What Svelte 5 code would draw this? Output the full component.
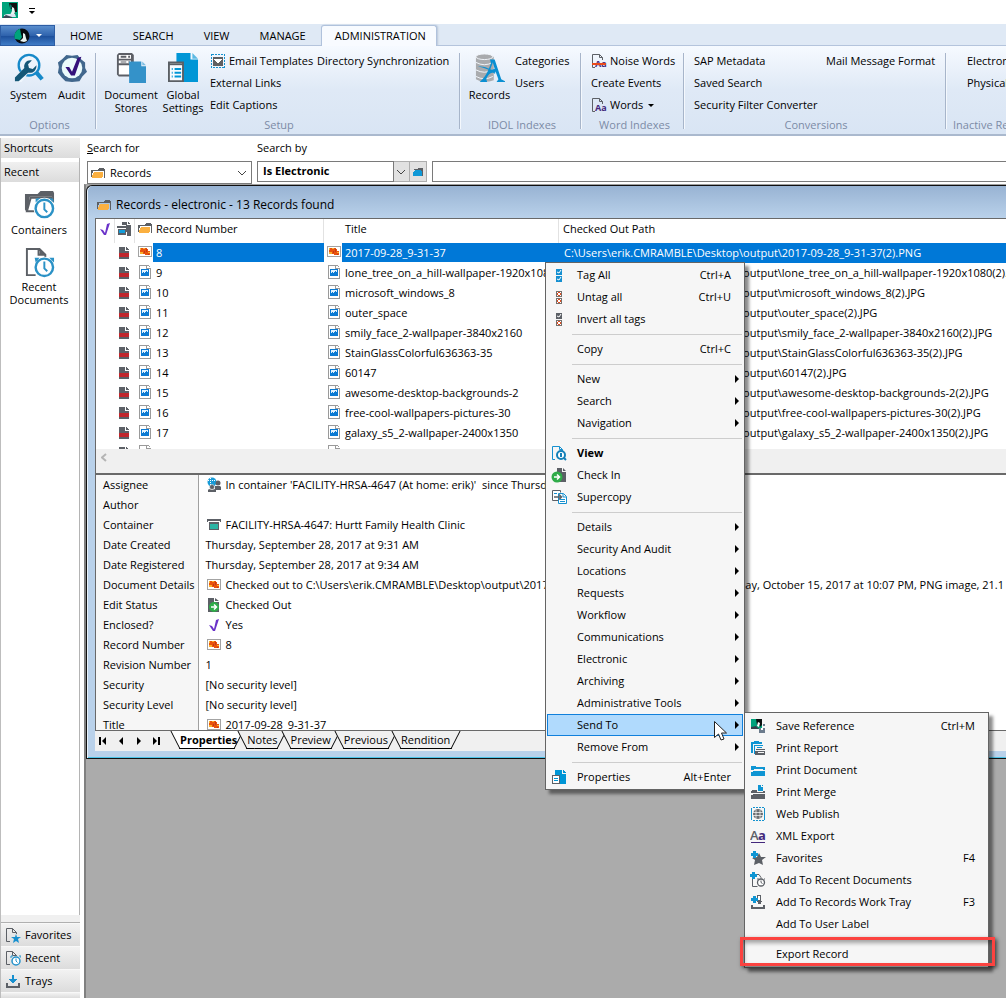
<script lang="ts">
  /**
   * Records client main window: ribbon, shortcut bar, search results list,
   * property sheet and the record context menu with its "Send To" submenu.
   */

  interface MenuEntry {
    label?: string;
    icon?: string;
    keys?: string;
    sub?: boolean;
    bold?: boolean;
    open?: boolean;
  }

  interface PropertyRow {
    name: string;
    value: string;
    icon?: string;
  }

  const TABS = ['HOME', 'SEARCH', 'VIEW', 'MANAGE', 'ADMINISTRATION'];

  const RECORDS = [
    { id: '8', title: '2017-09-28_9-31-37', file: '2017-09-28_9-31-37(2).PNG' },
    { id: '9', title: 'lone_tree_on_a_hill-wallpaper-1920x1080', file: 'lone_tree_on_a_hill-wallpaper-1920x1080(2).JPG' },
    { id: '10', title: 'microsoft_windows_8', file: 'microsoft_windows_8(2).JPG' },
    { id: '11', title: 'outer_space', file: 'outer_space(2).JPG' },
    { id: '12', title: 'smily_face_2-wallpaper-3840x2160', file: 'smily_face_2-wallpaper-3840x2160(2).JPG' },
    { id: '13', title: 'StainGlassColorful636363-35', file: 'StainGlassColorful636363-35(2).JPG' },
    { id: '14', title: '60147', file: '60147(2).JPG' },
    { id: '15', title: 'awesome-desktop-backgrounds-2', file: 'awesome-desktop-backgrounds-2(2).JPG' },
    { id: '16', title: 'free-cool-wallpapers-pictures-30', file: 'free-cool-wallpapers-pictures-30(2).JPG' },
    { id: '17', title: 'galaxy_s5_2-wallpaper-2400x1350', file: 'galaxy_s5_2-wallpaper-2400x1350(2).JPG' },
    { id: '', title: '', file: '' },
  ];

  const FOLDER = 'C:\\Users\\erik.CMRAMBLE\\Desktop\\output\\';

  const PROPERTIES: PropertyRow[] = [
    { name: 'Assignee', value: "In container 'FACILITY-HRSA-4647 (At home: erik)'  since Thursday, September 28, 2017", icon: 'people' },
    { name: 'Author', value: '' },
    { name: 'Container', value: 'FACILITY-HRSA-4647: Hurtt Family Health Clinic', icon: 'box' },
    { name: 'Date Created', value: 'Thursday, September 28, 2017 at 9:31 AM' },
    { name: 'Date Registered', value: 'Thursday, September 28, 2017 at 9:34 AM' },
    { name: 'Document Details', value: 'Checked out to C:\\Users\\erik.CMRAMBLE\\Desktop\\output\\2017-09-28_9-31-37(2).PNG by erik on Sunday, October 15, 2017 at 10:07 PM, PNG image, 21.1 KB', icon: 'photo' },
    { name: 'Edit Status', value: 'Checked Out', icon: 'checkout' },
    { name: 'Enclosed?', value: 'Yes', icon: 'tick' },
    { name: 'Record Number', value: '8', icon: 'photo' },
    { name: 'Revision Number', value: '1' },
    { name: 'Security', value: '[No security level]' },
    { name: 'Security Level', value: '[No security level]' },
    { name: 'Title', value: '2017-09-28_9-31-37', icon: 'photo' },
  ];

  const SHEETS = ['Properties', 'Notes', 'Preview', 'Previous', 'Rendition'];

  const MENU: MenuEntry[] = [
    { label: 'Tag All', icon: 'tagall', keys: 'Ctrl+A' },
    { label: 'Untag all', icon: 'untag', keys: 'Ctrl+U' },
    { label: 'Invert all tags', icon: 'invert' },
    {},
    { label: 'Copy', keys: 'Ctrl+C' },
    {},
    { label: 'New', sub: true },
    { label: 'Search', sub: true },
    { label: 'Navigation', sub: true },
    {},
    { label: 'View', icon: 'view', bold: true },
    { label: 'Check In', icon: 'checkin' },
    { label: 'Supercopy', icon: 'supercopy' },
    {},
    { label: 'Details', sub: true },
    { label: 'Security And Audit', sub: true },
    { label: 'Locations', sub: true },
    { label: 'Requests', sub: true },
    { label: 'Workflow', sub: true },
    { label: 'Communications', sub: true },
    { label: 'Electronic', sub: true },
    { label: 'Archiving', sub: true },
    { label: 'Administrative Tools', sub: true },
    { label: 'Send To', sub: true, open: true },
    { label: 'Remove From', sub: true },
    {},
    { label: 'Properties', icon: 'settings', keys: 'Alt+Enter' },
  ];

  const SEND_TO: MenuEntry[] = [
    { label: 'Save Reference', icon: 'saveref', keys: 'Ctrl+M' },
    { label: 'Print Report', icon: 'printreport' },
    { label: 'Print Document', icon: 'printdoc' },
    { label: 'Print Merge', icon: 'printmerge' },
    { label: 'Web Publish', icon: 'web' },
    { label: 'XML Export', icon: 'xml' },
    { label: 'Favorites', icon: 'addfav', keys: 'F4' },
    { label: 'Add To Recent Documents', icon: 'addrecent' },
    { label: 'Add To Records Work Tray', icon: 'addtray', keys: 'F3' },
    { label: 'Add To User Label' },
    {},
    { label: 'Export Record' },
  ];

  let activeTab = $state('ADMINISTRATION');
  let activeSheet = $state('Properties');
  let selectedRow = $state(0);
  let searchBy = $state('Is Electronic');
</script>

{#snippet icon(name: string, size = 16)}
  <svg class="icon" width={size} height={size} aria-hidden="true"><use href="#{name}" /></svg>
{/snippet}

{#snippet bigButton(name: string, lines: string[])}
  <button class="big">
    {@render icon(name, 32)}
    {#each lines as line}<span>{line}</span>{/each}
  </button>
{/snippet}

{#snippet smallButton(label: string, name = '', arrow = false)}
  <button class="small">
    {#if name}{@render icon(name)}{/if}
    <span>{label}</span>
    {#if arrow}<i class="caret"></i>{/if}
  </button>
{/snippet}

{#snippet menuList(entries: MenuEntry[])}
  {#each entries as entry}
    {#if entry.label}
      <button class="entry" class:open={entry.open} class:bold={entry.bold} role="menuitem">
        <span class="entry-icon">{#if entry.icon}{@render icon(entry.icon)}{/if}</span>
        <span class="entry-label">{entry.label}</span>
        {#if entry.keys}<span>{entry.keys}</span>{/if}
        {#if entry.sub}<i class="more"></i>{/if}
      </button>
    {:else}
      <hr />
    {/if}
  {/each}
{/snippet}

<!-- icon sprite -->
<svg class="sprite" aria-hidden="true">
  <symbol id="logo" viewBox="0 0 16 16">
    <path fill="#00a37c" d="M0 0h16v16H0z" />
    <path fill="#111" d="M7 1h8v9h-2v2l-2-1V8L8 6z" />
    <path fill="#e8f4f1" d="M10 5l2 1 1 4-1 3H8l2-4z" />
    <path fill="#08786a" d="M8 2l2 2-1 3-1-1z" />
    <path fill="#dbe3ef" d="M2 13l3-1h8l1 3H2z" />
    <path fill="#3a4656" d="M1 15l3-2 3 1 3 1v1H1z" />
  </symbol>
  <symbol id="logo-round" viewBox="0 0 16 16">
    <circle cx="8" cy="8" r="7.500" fill="#080c10" />
    <path fill="#00a37c" d="M6 .8A7.500 7.500 0 0 0 1 11l5 1 2-3-1-3z" />
    <path fill="#e8f2f0" d="M9 5l2 1 1 4 1 3-3 1-4-1 3-3z" />
  </symbol>
  <symbol id="system" viewBox="0 0 32 32">
    <circle cx="16" cy="13" r="11" fill="none" stroke="#1689c9" stroke-width="2.500" />
    <path stroke="#1689c9" stroke-width="4.500" d="M24 21l6 7" />
    <path fill="#f0f7fd" d="M2 25L13 14l4 5L8 31H2z" />
    <path fill="#155777" d="M1 26L11 16c-1-5 3-9 8-8l-4 4 1 4 4 1 4-4c0 6-4 9-9 8L5 30H1z" />
  </symbol>
  <symbol id="audit" viewBox="0 0 32 32">
    <path fill="#41678d" d="M10 2l6 1 6-1 3 4 5 4v6l2 4-5 5-3 5-8 1-7-1-4-4-4-5 1-6-1-5 5-4z" />
    <circle cx="16" cy="16" r="11" fill="#eafafb" />
    <path fill="#33127a" d="M9 15h4l3 5 6-15 4-1-7 20h-4z" />
  </symbol>
  <symbol id="stores" viewBox="0 0 32 32">
    <path fill="#5c5f66" d="M1 2l2-2h14l2 2v8h-3v15H3l-2-2z" />
    <path fill="#fff" d="M3 2h13v4H3zM3 8h13v3H3zM3 13h12v10H3z" />
    <path fill="#5c5f66" d="M5 3h6v2H5zM13 3h2v2h-2zM5 9h6v1H5zM13 9h2v1h-2z" />
    <path fill="#3492c9" d="M14 9h13v5h5v18H14z" />
    <path fill="#7ebee2" d="M28 9l4 4h-4z" />
  </symbol>
  <symbol id="global" viewBox="0 0 32 32">
    <path fill="#0096d6" d="M9 0h15v7h8v24H9z" />
    <path fill="#5bb9e3" d="M26 0l6 6h-6z" />
    <path fill="#f8fbfe" stroke="#5a5f64" stroke-width="2" d="M1 10h15v20H1z" />
    <path stroke="#5a5f64" stroke-width="2" d="M1 12h15" />
    <path stroke="#0096d6" stroke-width="2" d="M4 17h1M7 17h7M4 21h1M7 21h7M4 25h1M7 25h7" />
  </symbol>
  <symbol id="idol" viewBox="0 0 32 32">
    <path fill="#a9abae" d="M1 4v24q8 5 19 1V4z" />
    <ellipse cx="10" cy="4" rx="9" ry="3" fill="#a9abae" stroke="#f3f8fd" />
    <path fill="none" stroke="#f3f8fd" d="M1 10q9 5 18 0M1 18q9 5 18 0M1 25q9 5 18 0" />
    <path fill="#0a8fd2" d="M16 7h5l7 21 4 2v1h-9l2-3-3-8c-6 1-8 3-10 8l1 3H5c8-7 10-15 12-20l-1-4zM16 18l5-1-2-7z" />
    <path fill="#0a8fd2" d="M3 14c8 0 14 3 19 7l-1 1C15 17 10 16 3 14z" />
  </symbol>
  <symbol id="email" viewBox="0 0 16 16" shape-rendering="crispEdges">
    <path fill="none" stroke="#1592cf" stroke-dasharray="2 1" d="M1.500 1.500h13v13h-13z" />
    <path fill="#5f6062" d="M3 4h10v9H3z" />
    <path fill="#fff" d="M4 6h8v1h-1v1h-1v1H9v1H7V9H6V8H5V7H4z" />
  </symbol>
  <symbol id="words" viewBox="0 0 16 16">
    <path fill="none" stroke="#5c6066" d="M4 14.500H1.500v-13h7l3 3V7M8.500 1.500v3h3" />
    <text x="4" y="14" font-family="Open Sans" font-size="9" font-weight="700" fill="#43287c">Aa</text>
  </symbol>
  <symbol id="noise" viewBox="0 0 16 16">
    <path fill="none" stroke="#5c6066" d="M4 14.500H1.500v-13h7l3 3V7M8.500 1.500v3h3" />
    <text x="4" y="14" font-family="Open Sans" font-size="9" font-weight="700" fill="#43287c">Aa</text>
    <path fill="#ea4b1c" d="M1 10h14v2H1z" />
  </symbol>
  <symbol id="folder" viewBox="0 0 16 16" shape-rendering="crispEdges">
    <path fill="#5c5f63" d="M1 5h7V4h1V3h5v1h1v9h-1V6H3v2H2v4H1z" />
    <path fill="#fbb040" d="M4 7h9v5h-1v1H2v-3h1V8h1z" />
  </symbol>
  <symbol id="bluefolder" viewBox="0 0 16 16" shape-rendering="crispEdges">
    <path fill="#5c5f63" d="M4 5h4V4h5v8h-2V6H4z" />
    <path fill="#0f98d6" d="M5 6h6v1h1v5H3V8h1V7h1z" />
  </symbol>
  <symbol id="containers" viewBox="0 0 32 32">
    <path fill="#5c6066" d="M1 4h13l3-3h13l1 2v10h-2V7H6L4 22H2L1 20z" />
    <path fill="#fff" stroke="#5c6066" stroke-width="2" d="M7 8h21v14H3z" />
    <circle cx="21" cy="19" r="11" fill="#fff" />
    <path fill="#2b92c6" d="M12 9l5-1-5 5zM30 9l-5-1 6 5z" />
    <circle cx="21" cy="19" r="9" fill="#fff" stroke="#2b92c6" stroke-width="2.500" />
    <path fill="none" stroke="#2b92c6" stroke-width="2" d="M21 13v7l3 3" />
  </symbol>
  <symbol id="recentdocs" viewBox="0 0 32 32">
    <path fill="#fff" stroke="#5c6066" stroke-width="2" d="M12 29H3V2h13l6 6v5M15 2v6h7" />
    <path fill="#5c6066" d="M16 2l6 6h-6z" />
    <circle cx="21" cy="21" r="11" fill="#fff" />
    <path fill="#2b92c6" d="M11 11h5l-4 5zM31 11h-5l5 5z" />
    <circle cx="21" cy="21" r="9" fill="#fff" stroke="#2b92c6" stroke-width="2.500" />
    <path fill="none" stroke="#2b92c6" stroke-width="2" d="M21 15v7l3 3" />
  </symbol>
  <symbol id="favorites" viewBox="0 0 16 16">
    <path fill="none" stroke="#5c6066" d="M5 14.500H1.500v-13h6l4 4V7M7.500 1.500v4h4" />
    <path fill="#1790cf" d="M11 7l1 3h4l-3 2 1 4-3-2-3 2 1-4-3-2h4z" />
  </symbol>
  <symbol id="recent" viewBox="0 0 16 16">
    <path fill="none" stroke="#5c6066" d="M5 14.500H1.500v-13h6l4 4V6M7.500 1.500v4h4" />
    <circle cx="11" cy="11" r="4" fill="#fff" stroke="#2492cb" stroke-width="1.500" />
    <path fill="none" stroke="#2492cb" d="M11 8.500V11l1.500 1.500M6 8V6h2M14 6h2v2" />
  </symbol>
  <symbol id="tray" viewBox="0 0 16 16" shape-rendering="crispEdges">
    <path fill="#5c6066" d="M1 10h2v3h10v-3h2v5H1z" />
    <path fill="#1790cf" d="M7 2h2v4h3v1h-1v1h-1v1H9v1H7V9H6V8H5V7H4V6h3z" />
  </symbol>
  <symbol id="tick" viewBox="0 0 16 16">
    <path fill="#6a32c9" d="M3 8l3 1 2 3 2-9 3-1-4 12H7z" />
  </symbol>
  <symbol id="rectype" viewBox="0 0 16 16" shape-rendering="crispEdges">
    <path fill="#5c6066" d="M6 1h5v3h4v11h-4v-4H6zM12 1l2 2h-2z" />
    <path fill="#fff" d="M1 4h9v1H1zM1 7h9v1H1z" />
    <path fill="#5c6066" d="M1 5h9v2H1zM2 8h8v6H2z" />
    <path fill="#129cd9" d="M3 9h6v3H3z" />
  </symbol>
  <symbol id="doc" viewBox="0 0 16 16" shape-rendering="crispEdges">
    <path fill="#5c6066" d="M3 2h6v4h4v8H3zM10 2h1v1h1v1h1v1h-3z" />
    <path fill="#c1272d" d="M3 8h10v4H3z" />
  </symbol>
  <symbol id="photo" viewBox="0 0 16 16" shape-rendering="crispEdges">
    <path fill="#fff" stroke="#a3a3a3" d="M1.500 2.500h13v10h-13z" />
    <path fill="#e9520f" d="M3 4h7v1h1v2h2v4H8v-1H3z" />
    <path fill="#fbb12b" d="M3 4h1v2H3zM6 4h2v1H6zM3 8h3v2H3zM11 8h2v1h-2z" />
    <path fill="#c03a18" d="M7 7h1v2H7zM9 5h1v3H9zM11 10h1v1h-1z" />
  </symbol>
  <symbol id="image" viewBox="0 0 16 16" shape-rendering="crispEdges">
    <path fill="#fff" stroke="#9a9a9a" d="M2.500 1.500h7v3h4v10h-11zM9.500 1.500h2l2 2" />
    <path fill="#0b7ad3" d="M4 5h8v7H4z" />
    <path fill="#e3f2fc" d="M5 6h6v2h-1V7H9v1H8v1H7V8H6v1H5z" />
  </symbol>
  <symbol id="people" viewBox="0 0 16 16">
    <circle cx="6" cy="5" r="4.500" fill="#189bd7" />
    <path stroke="#fff" stroke-dasharray="1 1" d="M2 3.500h8M4.500 1v8" />
    <circle cx="12" cy="6" r="2.500" fill="#5c6066" />
    <circle cx="6" cy="10" r="2.500" fill="#5c6066" stroke="#fff" stroke-width=".5" />
    <path fill="#5c6066" d="M9 9h5l1 1v3H9zM2 13l1-1 3 1 3-1 1 1v2H2z" />
  </symbol>
  <symbol id="box" viewBox="0 0 16 16" shape-rendering="crispEdges">
    <path fill="#5c6066" d="M1 2h14v3h-1V4H2v1H1zM3 5h10v2H3zM3 7h1v6H3zM12 7h1v6h-1zM3 12h10v1H3z" />
    <path fill="#2bb5a5" d="M4 7h8v5H4z" />
  </symbol>
  <symbol id="checkout" viewBox="0 0 16 16">
    <path fill="#5c6066" d="M2 1h6v4h5v10H2zM9 1l4 3H9z" />
    <circle cx="8" cy="10" r="5" fill="#2fac49" />
    <path fill="none" stroke="#fff" stroke-width="1.500" d="M5 10h5M8 7.500l2.500 2.500L8 12.500" />
  </symbol>
  <symbol id="checkin" viewBox="0 0 16 16">
    <path fill="#5c6066" d="M6 1h5v4h4v10H6zM12 1l3 3h-3z" />
    <circle cx="6" cy="10" r="5.500" fill="#2fac49" />
    <path fill="none" stroke="#fff" stroke-width="1.500" d="M3 10h5M6 7.500L8.500 10 6 12.500" />
  </symbol>
  <symbol id="view" viewBox="0 0 16 16">
    <path fill="none" stroke="#1690cf" d="M4 14.500H1.500v-13h7l3 3V6M8.500 1.500v3h3" />
    <circle cx="10" cy="10" r="4" fill="#fff" stroke="#1480b8" stroke-width="2" />
    <path stroke="#1480b8" stroke-width="2" d="M10 8v4M13 13l2 2" />
  </symbol>
  <symbol id="supercopy" viewBox="0 0 16 16">
    <path fill="#fff" stroke="#5c6066" d="M7 11.500H1.500v-10h8v2" />
    <path fill="#fff" stroke="#1690cf" d="M7.500 4.500h5l3 3v7h-8zM12 5v3h3" />
    <path fill="none" stroke="#5c6066" stroke-width="1.500" d="M3 8h7M8 5.500L10.500 8 8 10.500" />
    <path stroke="#1690cf" d="M9 10.500h5M9 12.500h5M3 4.500h3" />
  </symbol>
  <symbol id="tagall" viewBox="0 0 16 16">
    <path fill="#158fd0" d="M5 2h6v6H5zM5 9h6v6H5z" />
    <path fill="none" stroke="#fff" d="M6 5l2 1 2-3M6 12l2 1 2-3" />
  </symbol>
  <symbol id="untag" viewBox="0 0 16 16" shape-rendering="crispEdges">
    <path fill="#77706c" d="M5 2h6v6H5zM5 9h6v6H5z" />
    <path fill="#fff" d="M6 3h4v4H6zM6 10h4v4H6z" />
    <path fill="#dd4d20" fill-rule="evenodd" d="M7 3h2v1h1v2H9v1H7V6H6V4h1zM7 4v2h2V4zM7 10h2v1h1v2H9v1H7v-1H6v-2h1zM7 11v2h2v-2z" />
  </symbol>
  <symbol id="invert" viewBox="0 0 16 16">
    <path fill="#5c6066" d="M5 2h6v6H5z" />
    <path fill="none" stroke="#fff" d="M6 5l2 1 2-3" />
    <g shape-rendering="crispEdges">
      <path fill="#77706c" d="M5 9h6v6H5z" />
      <path fill="#fff" d="M6 10h4v4H6z" />
      <path fill="#dd4d20" fill-rule="evenodd" d="M7 10h2v1h1v2H9v1H7v-1H6v-2h1zM7 11v2h2v-2z" />
    </g>
  </symbol>
  <symbol id="settings" viewBox="0 0 16 16" shape-rendering="crispEdges">
    <path fill="#0096d6" d="M4 1h7v4h4v10H4zM12 1l3 3h-3z" />
    <path fill="#fff" stroke="#5c6066" d="M1.500 6.500h7v8h-7z" />
    <path fill="#0096d6" d="M3 9h4v1H3zM3 11h4v1H3z" />
  </symbol>
  <symbol id="saveref" viewBox="0 0 16 16">
    <path fill="#00a37c" d="M1 1h11v10H1z" />
    <path fill="#0c1211" d="M6 1h6v6l-2 2-1-2H7z" />
    <path fill="#fff" d="M8 4l2 1-1 4-2-1z" />
    <path fill="#35404a" d="M1 9l5-1 3 3H1z" />
    <path fill="#6b7b8c" d="M13 6h2v2h-2zM9 10h6v5H9z" />
    <path fill="#fff" d="M11 10h2v2h-2z" />
  </symbol>
  <symbol id="printreport" viewBox="0 0 16 16" shape-rendering="crispEdges">
    <path fill="#0f95d3" d="M1 2h3V1h5v1h3v2H3v9H1zM4 5h9v1H5v8H4zM7 7h5v1H7z" />
    <path fill="#5c6066" d="M6 9h9v1H6zM5 11h10v4H5z" />
    <path fill="#f6f6f6" d="M8 12h6v1H8z" />
  </symbol>
  <symbol id="printdoc" viewBox="0 0 16 16" shape-rendering="crispEdges">
    <path fill="#0f95d3" d="M1 4h5v1h9v3H1zM1 9h14v5H1z" />
    <path fill="#f6f6f6" d="M4 7h9v1H4zM1 9h2v1H1z" />
  </symbol>
  <symbol id="printmerge" viewBox="0 0 16 16" shape-rendering="crispEdges">
    <path fill="#0f95d3" d="M8 1h3v2h2v4H8zM12 1h1v1h-1z" />
    <path fill="#5c6066" d="M2 6h5v2h6V7h2v2H1zM1 10h14v5H1z" />
    <path fill="#f6f6f6" d="M1 10h2v1H1z" />
  </symbol>
  <symbol id="web" viewBox="0 0 16 16">
    <path fill="none" stroke="#1592cf" stroke-dasharray="2 1" d="M3 1.500h11M3 14.500h11" />
    <path stroke="#1592cf" d="M1.500 2v12M14.500 2v12" />
    <circle cx="8" cy="8" r="5" fill="#6b6d71" />
    <path fill="none" stroke="#fff" stroke-width=".7" d="M3 6.500h10M3 9.500h10M6 3.500v9M10 3.500v9" />
  </symbol>
  <symbol id="xml" viewBox="0 0 16 16">
    <text x="0" y="12" font-family="Open Sans" font-size="13" fill="#5c6066" font-weight="600">A</text>
    <text x="8" y="12" font-family="Open Sans" font-size="13" fill="#43287c" font-weight="700">a</text>
    <path fill="#43287c" d="M1 14h14v1H1z" />
  </symbol>
  <symbol id="addfav" viewBox="0 0 16 16">
    <path fill="#5c6066" d="M9 3l2 4h5l-4 3 1 5-4-2-5 2 1-5-3-2 5-1z" />
    <path fill="#0f95d3" d="M3 1h3v2h2v3H6v2H3V6H1V3h2z" />
  </symbol>
  <symbol id="addrecent" viewBox="0 0 16 16">
    <path fill="none" stroke="#5c6066" d="M2.500 7v7.500h5M7 2.500h2l2 3v1" />
    <circle cx="11" cy="10.500" r="3.500" fill="#fff" stroke="#5c6066" stroke-width="1.300" />
    <path fill="none" stroke="#5c6066" d="M11 8.500v2l1.500 1M7 7h2M14 7h1" />
    <path fill="#0f95d3" d="M2 0h3v2h2v3H5v2H2V5H0V2h2z" />
  </symbol>
  <symbol id="addtray" viewBox="0 0 16 16" shape-rendering="crispEdges">
    <path fill="#5c6066" d="M7 1h4v6h1v1h-1v2H8V8H7zM1 11h2v2h10v-2h2v4H1z" />
    <path fill="#fff" d="M8 2h2v4H8z" />
    <path fill="#0f95d3" d="M3 2h3v2h2v3H6v2H3V7H1V4h2z" />
  </symbol>
</svg>

<div class="app">
  <header class="titlebar">
    {@render icon('logo')}
    <button class="quick" aria-label="Customize toolbar"><i></i></button>
  </header>

  <nav class="tabs">
    <button class="file" aria-label="File">{@render icon('logo-round')}<i class="caret"></i></button>
    {#each TABS as tab}
      <button class="tab" class:active={tab === activeTab} onclick={() => (activeTab = tab)}>{tab}</button>
    {/each}
  </nav>

  <div class="ribbon">
    <section class="group g-options">
      <div class="tools">
        {@render bigButton('system', ['System'])}
        {@render bigButton('audit', ['Audit'])}
      </div>
      <h2>Options</h2>
    </section>
    <section class="group g-setup">
      <div class="tools">
        {@render bigButton('stores', ['Document', 'Stores'])}
        {@render bigButton('global', ['Global', 'Settings'])}
        <div class="stack">
          {@render smallButton('Email Templates', 'email')}
          {@render smallButton('External Links')}
          {@render smallButton('Edit Captions')}
        </div>
        <div class="stack">{@render smallButton('Directory Synchronization')}</div>
      </div>
      <h2>Setup</h2>
    </section>
    <section class="group g-idol">
      <div class="tools">
        {@render bigButton('idol', ['Records'])}
        <div class="stack">
          {@render smallButton('Categories')}
          {@render smallButton('Users')}
        </div>
      </div>
      <h2>IDOL Indexes</h2>
    </section>
    <section class="group g-words">
      <div class="tools">
        <div class="stack">
          {@render smallButton('Noise Words', 'noise')}
          {@render smallButton('Create Events')}
          {@render smallButton('Words', 'words', true)}
        </div>
      </div>
      <h2>Word Indexes</h2>
    </section>
    <section class="group g-conv">
      <div class="tools">
        <div class="stack">
          {@render smallButton('SAP Metadata')}
          {@render smallButton('Saved Search')}
          {@render smallButton('Security Filter Converter')}
        </div>
        <div class="stack">{@render smallButton('Mail Message Format')}</div>
      </div>
      <h2>Conversions</h2>
    </section>
    <section class="group g-inactive">
      <div class="tools">
        <div class="stack">
          {@render smallButton('Electronic')}
          {@render smallButton('Physical')}
        </div>
      </div>
      <h2>Inactive Records</h2>
    </section>
  </div>

  <div class="workspace">
    <aside class="shortcuts">
      <h2>Shortcuts</h2>
      <div class="shortcut-panel">
        <h3>Recent</h3>
        <button class="shortcut">{@render icon('containers', 32)}<span>Containers</span></button>
        <button class="shortcut">{@render icon('recentdocs', 32)}<span>Recent Documents</span></button>
      </div>
      <div class="grip"></div>
      <button class="bar">{@render icon('favorites')}Favorites</button>
      <button class="bar">{@render icon('recent')}Recent</button>
      <button class="bar">{@render icon('tray')}Trays</button>
      <div class="bar"></div>
    </aside>

    <main>
      <form class="search">
        <label for="search-for"><u>S</u>earch for</label>
        <label for="search-by" class="by">Search by</label>
        <div class="combo">
          {@render icon('folder')}
          <select id="search-for"><option>Records</option></select>
          <svg class="chev" width="9" height="6" aria-hidden="true"><path d="M0 1l4 4 4-4" /></svg>
        </div>
        <div class="criteria">
          <input id="search-by" type="text" bind:value={searchBy} />
          <button type="button" aria-label="Search methods">
            <svg class="chev" width="9" height="6" aria-hidden="true"><path d="M0 1l4 4 4-4" /></svg>
          </button>
          <button type="button" aria-label="Browse">{@render icon('bluefolder')}</button>
        </div>
        <input class="text" type="text" aria-label="Search text" />
      </form>

      <div class="mdi">
        <section class="child">
          <h1>{@render icon('folder')}Records - electronic - 13 Records found</h1>

          <div class="list">
            <div class="viewport">
              <table>
                <colgroup>
                  <col class="c-tag" /><col class="c-type" /><col class="c-number" /><col class="c-title" /><col />
                </colgroup>
                <thead>
                  <tr>
                    <th>{@render icon('tick')}</th>
                    <th>{@render icon('rectype')}</th>
                    <th><span class="cell">{@render icon('folder')}<span>Record Number</span></span></th>
                    <th class="h-title">Title</th>
                    <th class="h-path">Checked Out Path</th>
                  </tr>
                </thead>
                <tbody>
                  {#each RECORDS as record, i}
                    <tr class:selected={i === selectedRow} onclick={() => (selectedRow = i)}>
                      <td></td>
                      <td>{@render icon('doc')}</td>
                      <td><span class="cell">{@render icon(i === 0 ? 'photo' : 'image')}<span>{record.id}</span></span></td>
                      <td><span class="cell">{@render icon(i === 0 ? 'photo' : 'image')}<span>{record.title}</span></span></td>
                      <td class="path">{record.file ? FOLDER + record.file : ''}</td>
                    </tr>
                  {/each}
                </tbody>
              </table>
            </div>
            <div class="hscroll">
              <svg width="6" height="9" aria-hidden="true"><path d="M5 1L1 4.500 5 8" /></svg>
            </div>
          </div>

          <div class="sheet">
            <table>
              <tbody>
                {#each PROPERTIES as row}
                  <tr>
                    <th scope="row">{row.name}</th>
                    <td>
                      <span class="value">{#if row.icon}{@render icon(row.icon)}{/if}<span>{row.value}</span></span>
                    </td>
                  </tr>
                {/each}
              </tbody>
            </table>
          </div>

          <div class="sheet-tabs">
            <div class="nav">
              <button aria-label="First"><svg width="8" height="8"><path d="M0 0h2v8H0zM7 0v8L3 4z" /></svg></button>
              <button aria-label="Previous"><svg width="8" height="8"><path d="M6 0v8L2 4z" /></svg></button>
              <button aria-label="Next"><svg width="8" height="8"><path d="M2 0v8l4-4z" /></svg></button>
              <button aria-label="Last"><svg width="8" height="8"><path d="M6 0h2v8H6zM1 0v8l4-4z" /></svg></button>
            </div>
            {#each SHEETS as sheet}
              <button class="sheet-tab" class:active={sheet === activeSheet} onclick={() => (activeSheet = sheet)}>
                <span>{sheet}</span>
              </button>
            {/each}
          </div>
        </section>
      </div>
    </main>
  </div>

  <div class="menu context" role="menu" tabindex="-1">
    {@render menuList(MENU)}
    <svg class="pointer" width="13" height="20" viewBox="0 0 13 20" aria-hidden="true">
      <path d="M.5.5v16l4-3.500 2.500 6 3-1-2.500-6h5z" fill="#fff" stroke="#222" />
    </svg>
    <div class="menu submenu" role="menu" tabindex="-1">
      {@render menuList(SEND_TO)}
      <div class="highlight"></div>
    </div>
  </div>
</div>

<style>
  :global(body) {
    margin: 0;
    overflow: hidden;
  }

  .app {
    position: relative;
    display: flex;
    flex-direction: column;
    height: 100vh;
    overflow: hidden;
    background: #fff;
    color: #000;
    font: 11px/14px 'Open Sans', 'Noto Sans', sans-serif;
  }

  .app :is(button, input, select) {
    font: inherit;
    color: inherit;
    margin: 0;
    padding: 0;
    border: 0;
    border-radius: 0;
    background: none;
    box-sizing: border-box;
    white-space: nowrap;
  }

  h1,
  h2,
  h3 {
    margin: 0;
    font: inherit;
  }

  .sprite {
    position: absolute;
    width: 0;
    height: 0;
  }

  .icon {
    flex: none;
    display: block;
  }

  .caret {
    border: 3px solid transparent;
    border-top-color: currentColor;
    border-bottom: 0;
  }

  /* title bar and ribbon */
  .titlebar {
    display: flex;
    align-items: center;
    gap: 11px;
    height: 24px;
    padding: 0 2px 4px;
    box-sizing: border-box;
  }

  .quick i {
    display: block;
    border: 3px solid transparent;
    border-top-color: #000;
    border-bottom: 0;
    position: relative;
    margin-top: 4px;
  }

  .quick i::before {
    content: '';
    position: absolute;
    left: -3px;
    top: -6px;
    width: 6px;
    height: 1px;
    background: #000;
  }

  .tabs {
    display: flex;
    height: 22px;
    background: #dfe9f5;
    box-shadow: inset 0 -1px #b4c4dc;
  }

  .tabs .file {
    display: flex;
    align-items: center;
    justify-content: center;
    gap: 6px;
    width: 55px;
    margin-top: 1px;
    border: 1px solid #2d5da4;
    background: linear-gradient(#5a8ecd, #2f63ad 50%, #1b4d99 51%, #3f7cc6);
    color: #fff;
  }

  .tabs .tab {
    padding: 0 14px;
    border: 1px solid transparent;
    border-bottom: 0;
  }

  .tabs .tab.active {
    margin-top: 1px;
    padding: 0 10px 0 13px;
    background: #f8fbff;
    border-color: #b0c2dc;
    border-radius: 3px 3px 0 0;
    box-shadow: 1px 0 2px #b9c6d8;
  }

  .ribbon {
    display: flex;
    flex: none;
    height: 90px;
    box-sizing: border-box;
    background: linear-gradient(#f6faff, #dfe9f6 50%, #d9e5f4);
    border-bottom: 2px solid #aab9ce;
    margin-bottom: 2px;
    overflow: hidden;
  }

  .group {
    flex: none;
    display: flex;
    flex-direction: column;
    justify-content: space-between;
    box-sizing: border-box;
    padding: 4px 0 2px;
    position: relative;
  }

  .group::after {
    content: '';
    position: absolute;
    right: 0;
    top: 7px;
    bottom: 5px;
    width: 1px;
    background: #a7b5ca;
    box-shadow: 1px 0 #f4f8fd;
  }

  .group h2 {
    text-align: center;
    color: #7c8ba6;
    white-space: nowrap;
  }

  .g-options { width: 96px; padding-left: 7px; padding-right: 4px; }
  .g-setup { width: 364px; padding-left: 6px; padding-right: 4px; }
  .g-idol { width: 121px; padding-left: 7px; padding-right: 4px; }
  .g-words { width: 103px; padding-left: 10px; padding-right: 6px; }
  .g-conv { width: 262px; padding-left: 10px; padding-right: 8px; }
  .g-inactive { width: 160px; padding-left: 7px; }
  .g-inactive h2 { text-align: left; }
  .g-inactive .stack { padding-left: 14px; }
  .g-conv .stack:first-child { width: 132px; }

  .tools {
    display: flex;
    height: 66px;
  }

  .tools > * {
    flex: none;
  }

  .big {
    display: flex;
    flex-direction: column;
    align-items: center;
    width: 43px;
    padding-top: 3px !important;
    line-height: 13px !important;
  }

  .big .icon {
    width: 30px;
    height: 30px;
    margin-bottom: 5px;
  }

  .g-setup .big {
    width: 58px;
  }

  .g-setup .big + .big {
    width: 46px;
  }

  .g-idol .big {
    width: 45px;
  }

  .stack {
    padding-left: 4px;
    box-sizing: border-box;
  }

  .g-setup .stack:last-child,
  .g-idol .stack {
    padding-left: 3px;
  }

  .g-words .stack,
  .g-conv .stack {
    padding-left: 0;
  }

  .g-setup .stack:nth-last-child(2) {
    width: 108px;
  }

  .small {
    display: flex;
    align-items: center;
    gap: 3px;
    height: 22px;
  }

  .small .caret {
    margin-left: 2px;
  }

  /* shortcut bar */
  .workspace {
    flex: 1;
    display: flex;
    min-height: 0;
  }

  .shortcuts {
    flex: none;
    display: flex;
    flex-direction: column;
    width: 80px;
    background: #e9e9e9;
    box-sizing: border-box;
    border-left: 1px solid #bdbdbd;
  }

  .shortcuts h2,
  .shortcuts h3 {
    height: 20px;
    line-height: 20px;
    padding-left: 3px;
    background: linear-gradient(#f0f0f0, #dcdcdc);
  }

  .shortcuts h3 {
    margin-top: 4px;
    margin-bottom: 8px;
  }

  .shortcut-panel {
    flex: 1;
    background: #fff;
    border-right: 1px solid #b4b4b4;
  }

  .shortcut {
    display: flex;
    flex-direction: column;
    align-items: center;
    width: 76px;
    margin-bottom: 11px !important;
    line-height: 13px !important;
    white-space: normal !important;
  }

  .shortcut .icon {
    width: 31px;
    height: 31px;
    margin-bottom: 2px;
  }

  .shortcut span {
    width: 64px;
  }

  .grip {
    height: 7px;
    background: #f0f0f0;
    border-bottom: 1px solid #b0b0b0;
  }

  .bar {
    display: flex;
    align-items: center;
    gap: 4px;
    height: 23px;
    padding-left: 4px !important;
    background: linear-gradient(#f2f2f2, #dcdcdc) !important;
    border-top: 1px solid #f8f8f8 !important;
  }

  div.bar {
    height: 6px;
    box-sizing: border-box;
  }

  /* search form */
  main {
    flex: 1;
    display: flex;
    flex-direction: column;
    min-width: 0;
    padding-left: 4px;
  }

  .search {
    display: grid;
    grid-template-columns: 165px 170px 1fr;
    column-gap: 5px;
    row-gap: 3px;
    padding-left: 3px;
  }

  .search label {
    line-height: 20px;
  }

  .search .by {
    grid-column: 2 / 4;
  }

  .combo {
    display: flex;
    align-items: center;
    height: 23px;
    box-sizing: border-box;
    border: 1px solid #7a7a7a;
    padding: 0 4px 0 2px;
  }

  .combo select {
    flex: 1;
    appearance: none;
    padding-left: 4px;
    outline: 0;
  }

  .chev {
    fill: none;
    stroke: #444;
  }

  .criteria {
    display: flex;
    height: 21px;
  }

  .criteria input {
    width: 137px;
    border: 1px solid #7a7a7a;
    padding-left: 5px;
    padding-bottom: 2px;
    font-weight: 700;
  }

  .criteria button {
    display: flex;
    align-items: center;
    justify-content: center;
    width: 17px;
    background: #e1e1e1;
    border: 1px solid #adadad;
    border-left: 0;
  }

  .search .text {
    height: 21px;
    border: 1px solid #7a7a7a;
    border-right: 0;
  }

  /* result window */
  .mdi {
    flex: 1;
    min-height: 0;
    background: #ababab;
    border-top: 1px solid #a0a0a0;
    border-left: 2px solid #808080;
  }

  .child {
    border: 1px solid #111;
    border-right: 0;
    border-radius: 6px 0 0 0;
    padding: 1px 0 7px 8px;
    background: linear-gradient(#98b3d3, #b9d1ea 32px);
    box-shadow: inset 1px 0 #eaf3fb, inset 0 -1px #4cc4e8;
  }

  .child h1 {
    display: flex;
    align-items: center;
    gap: 4px;
    height: 31px;
    padding: 5px 0 0 1px;
    box-sizing: border-box;
    white-space: nowrap;
    font-size: 12px;
  }

  .list {
    border-left: 1px solid #696969;
    border-top: 1px solid #696969;
    background: #fff;
  }

  .viewport {
    height: 230px;
    overflow: hidden;
  }

  table {
    border-collapse: collapse;
    table-layout: fixed;
    width: 100%;
    white-space: nowrap;
  }

  .c-tag { width: 19px; }
  .c-type { width: 20px; }
  .c-number { width: 189px; }
  .c-title { width: 235px; }

  th,
  td {
    padding: 0;
    font-weight: 400;
    text-align: left;
    overflow: hidden;
    height: 20px;
  }

  thead th {
    height: 24px;
    padding-bottom: 4px;
    box-sizing: border-box;
    background: linear-gradient(#e2e2e2, #e2e2e2) right / 1px 100% no-repeat;
  }

  thead th:last-child {
    background: none;
  }

  .h-title { padding-left: 21px; }
  .h-path { padding-left: 4px; }

  tbody .icon {
    margin-left: 1px;
  }

  thead .icon {
    margin-left: 1px;
  }

  .cell {
    display: flex;
    align-items: flex-start;
    height: 20px;
    padding-left: 1px;
  }

  .cell .icon {
    margin-top: 1px;
  }

  .cell > span {
    flex: 1;
    height: 19px;
    overflow: hidden;
    line-height: 19px;
    padding-left: 3px;
  }

  thead .cell > span {
    line-height: 20px;
  }

  .path {
    padding-left: 5px;
  }

  .selected .cell > span,
  .selected .path {
    background: #0078d7;
    color: #fff;
  }

  .hscroll {
    height: 24px;
    display: flex;
    align-items: center;
    padding: 0 5px 7px;
    box-sizing: border-box;
    background: #f0f0f0;
  }

  .hscroll path {
    fill: none;
    stroke: #b5b5b5;
    stroke-width: 2;
  }

  .sheet {
    height: 258px;
    overflow: hidden;
    box-sizing: border-box;
    background: #fff;
    border: solid #696969;
    border-width: 2px 0 1px 1px;
  }

  .sheet th {
    width: 102px;
    padding-left: 7px;
    box-sizing: border-box;
    background: #f6f6f6;
    border-right: 1px solid #a0a0a0;
  }

  .sheet td {
    padding-left: 7px;
  }

  .sheet .icon {
    margin-left: 0;
  }

  .value {
    display: flex;
    align-items: center;
    gap: 4px;
    white-space: pre;
  }

  .sheet-tabs {
    display: flex;
    height: 20px;
    background: #f0f0f0;
  }

  .nav {
    display: flex;
    width: 75px;
    padding-left: 4px;
    box-sizing: border-box;
    margin-right: 5px;
  }

  .nav button {
    width: 18px;
    text-align: left;
  }

  .sheet-tab {
    position: relative;
    height: 18px;
    padding: 0 5px !important;
    margin-right: 3px !important;
    line-height: 18px !important;
  }

  .sheet-tab::before,
  .sheet-tab::after {
    content: '';
    position: absolute;
    top: 0;
    bottom: 0;
    width: 55%;
    border-bottom: 1px solid #000;
    background: #f0f0f0;
  }

  .sheet-tab::before {
    left: 0;
    border-left: 1px solid #000;
    transform: skewX(27deg);
  }

  .sheet-tab::after {
    right: 0;
    border-right: 1px solid #000;
    transform: skewX(-27deg);
  }

  .sheet-tab span {
    position: relative;
    z-index: 1;
  }

  .sheet-tab.active {
    font-weight: 700;
    padding-right: 2px !important;
  }

  .sheet-tab.active::before,
  .sheet-tab.active::after {
    background: #fff;
  }

  /* menus */
  .menu {
    position: absolute;
    box-sizing: border-box;
    padding: 1px;
    background: #f6f6f6;
    border: 1px solid #646464;
    box-shadow: 4px 4px 3px rgba(0, 0, 0, 0.45);
  }

  .context {
    left: 545px;
    top: 262px;
    width: 200px;
  }

  .submenu {
    left: 198px;
    top: 449px;
    width: 245px;
    padding: 2px 1px;
  }

  .entry {
    display: flex;
    align-items: center;
    position: relative;
    width: 100%;
    height: 22px;
    padding: 0 12px 0 4px !important;
    text-align: left;
  }

  .entry.open {
    background: #b0dafd;
    box-shadow: inset 0 0 0 1px #1080dc;
  }

  .entry.bold {
    font-weight: 700;
  }

  .entry-icon {
    width: 26px;
  }

  .entry-label {
    flex: 1;
  }

  .more {
    position: absolute;
    right: 4px;
    top: 7px;
    border: 4px solid transparent;
    border-left-color: #000;
    border-right: 0;
  }

  .menu hr {
    height: 1px;
    margin: 4px 1px 3px 25px;
    border: 0;
    background: #cdcdcd;
  }

  .pointer {
    position: absolute;
    left: 168px;
    top: 458px;
  }

  .highlight {
    position: absolute;
    left: -5px;
    right: -7px;
    bottom: 1px;
    height: 29px;
    box-sizing: border-box;
    border: 3px solid #fb4340;
    box-shadow: 2px 2px 4px rgba(0, 0, 0, 0.6), inset 1px 3px 4px rgba(0, 0, 0, 0.35);
  }
</style>
